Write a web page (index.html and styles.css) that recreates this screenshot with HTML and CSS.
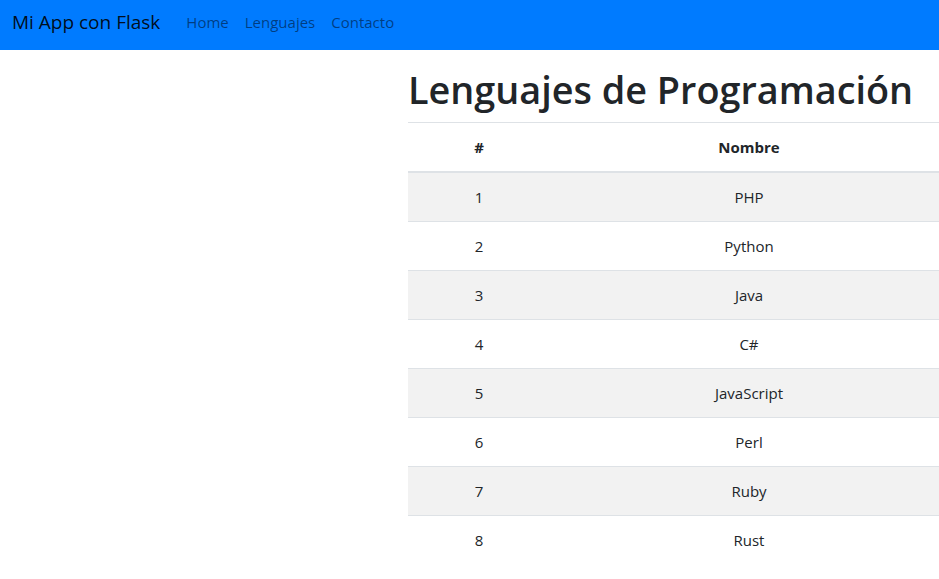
FILE: index.html
```html
<!DOCTYPE html>
<html lang="es">
<head>
<meta charset="utf-8">
<title>Mi App con Flask</title>
<link rel="stylesheet" href="styles.css">
</head>
<body>
<nav class="navbar">
  <a class="brand" href="#">Mi App con Flask</a>
  <ul class="nav">
    <li><a href="#">Home</a></li>
    <li><a href="#">Lenguajes</a></li>
    <li><a href="#">Contacto</a></li>
  </ul>
</nav>
<main class="main">
  <section class="content">
    <h1 class="title">Lenguajes de Programación</h1>
    <table class="table">
      <thead>
        <tr><th class="c-num">#</th><th class="c-name">Nombre</th></tr>
      </thead>
      <tbody>
        <tr><td>1</td><td>PHP</td></tr>
        <tr><td>2</td><td>Python</td></tr>
        <tr><td>3</td><td>Java</td></tr>
        <tr><td>4</td><td>C#</td></tr>
        <tr><td>5</td><td>JavaScript</td></tr>
        <tr><td>6</td><td>Perl</td></tr>
        <tr><td>7</td><td>Ruby</td></tr>
        <tr><td>8</td><td>Rust</td></tr>
      </tbody>
    </table>
  </section>
</main>
</body>
</html>
```
FILE: styles.css
```css
html, body {
  margin: 0;
  padding: 0;
  overflow-x: hidden;
}
body {
  font-family: "Open Sans", "Noto Sans", sans-serif;
  font-size: 15px;
  color: #212529;
  background: #fff;
}
.navbar {
  display: flex;
  align-items: center;
  box-sizing: border-box;
  height: 50px;
  padding: 0 12px 6px;
  background: #007bff;
}
.brand {
  font-size: 19px;
  color: rgba(0, 0, 0, 0.9);
  text-decoration: none;
  margin-right: 18px;
}
.nav {
  display: flex;
  list-style: none;
  margin: 0;
  padding: 0;
}
.nav a {
  display: block;
  padding: 0 8px;
  color: rgba(0, 0, 0, 0.5);
  text-decoration: none;
  font-size: 15px;
}
.main {
  padding-left: 408px;
  padding-top: 16px;
}
.content {
  width: 540px;
}
.title {
  margin: 0 0 8px;
  font-size: 37.8px;
  font-weight: 600;
  line-height: 48px;
  color: #212529;
}
.table {
  width: 540px;
  border-collapse: collapse;
}
.table th, .table td {
  padding: 12px;
  line-height: 24px;
  text-align: center;
  border-top: 1px solid #dee2e6;
}
.table th {
  font-weight: 700;
  border-bottom: 2px solid #dee2e6;
}
.c-num { width: 118px; }
.table tbody tr:nth-child(odd) {
  background: #f2f2f2;
}
```
